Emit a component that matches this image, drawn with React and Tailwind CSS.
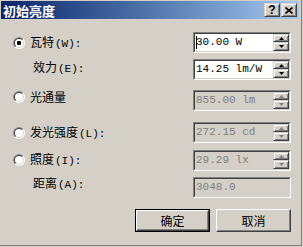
import React, { useId } from "react";

const raised =
  "border border-t-[#ffffff] border-l-[#ffffff] border-r-[#404040] border-b-[#404040] shadow-[inset_-1px_-1px_0_#808080]";
const raisedTitle =
  "border border-t-[#d4d0c8] border-l-[#d4d0c8] border-r-[#404040] border-b-[#404040] shadow-[inset_1px_1px_0_#ffffff,inset_-1px_-1px_0_#808080]";

function Radio({ checked }) {
  const id = useId().replace(/:/g, "");
  return (
    <svg width="12" height="12" viewBox="0 0 12 12" className="shrink-0">
      <defs>
        <clipPath id={"tl" + id}>
          <polygon points="0,0 12,0 0,12" />
        </clipPath>
      </defs>
      <circle cx="6" cy="6" r="6" fill="#ffffff" />
      <circle cx="6" cy="6" r="6" fill="#808080" clipPath={`url(#tl${id})`} />
      <circle cx="6" cy="6" r="5" fill="#d4d0c8" />
      <circle cx="6" cy="6" r="5" fill="#404040" clipPath={`url(#tl${id})`} />
      <circle cx="6" cy="6" r="4" fill="#ffffff" />
      {checked && <rect x="4" y="4" width="4" height="4" rx="1.2" fill="#000" />}
    </svg>
  );
}

function Arrow({ up, disabled }) {
  const c = disabled ? "#808080" : "#000000";
  return (
    <svg width="5" height="3" viewBox="0 0 5 3">
      {up ? (
        <polygon points="2.5,0 5,3 0,3" fill={c} />
      ) : (
        <polygon points="0,0 5,0 2.5,3" fill={c} />
      )}
    </svg>
  );
}

function Field({ value, disabled, spin = true, caret }) {
  return (
    <div className="w-[98px] h-[21px] border border-t-[#808080] border-l-[#808080] border-r-[#ffffff] border-b-[#ffffff] shrink-0">
      <div
        className={
          "w-full h-full flex border border-t-[#404040] border-l-[#404040] border-r-[#d4d0c8] border-b-[#d4d0c8] " +
          (disabled ? "bg-[#d4d0c8]" : "bg-white")
        }
      >
        <div
          className={
            "flex-1 flex items-center pl-[1px] text-[11px] leading-none font-['Liberation_Mono',monospace] whitespace-pre " +
            (disabled ? "text-[#808080]" : "text-black")
          }
        >
          {caret && <span className="inline-block w-[1px] h-[13px] bg-black -mr-[1px]" />}
          {value}
        </div>
        {spin && (
          <div className="w-[16px] flex flex-col bg-[#d4d0c8]">
            <div className={"h-[8px] flex items-center justify-center " + raisedTitle}>
              <Arrow up disabled={disabled} />
            </div>
            <div className={"flex-1 flex items-center justify-center " + raisedTitle}>
              <Arrow disabled={disabled} />
            </div>
          </div>
        )}
      </div>
    </div>
  );
}

function Label({ children, latin }) {
  return (
    <span className="text-[12px] leading-none text-black whitespace-pre font-['Noto_Sans_CJK_SC',sans-serif]">
      {children}
      {latin && (
        <span className="ml-[1px] text-[11px] font-['Liberation_Mono','Noto_Sans_CJK_SC',monospace]">{latin}</span>
      )}
    </span>
  );
}

function Row({ mt, radio, checked, label, latin, pb = "pb-[0px]", indent, children }) {
  return (
    <div className={"flex h-[21px] " + mt}>
      <div className={"w-[192px] flex items-center " + pb + " " + (indent ? "pl-[32px]" : "pl-[12px]")}>
        {radio && (
          <span className="mr-[5px] flex">
            <Radio checked={checked} />
          </span>
        )}
        <Label latin={latin}>{label}</Label>
      </div>
      {children}
    </div>
  );
}

export default function App() {
  return (
    <div className="w-[303px] h-[247px] bg-[#d4d0c8] overflow-hidden">
      <div className="w-[302px] h-[246px] border-r border-b border-[#808080] pt-[1px] pl-[1px] flex flex-col">
        <div className="w-[298px] h-[18px] bg-gradient-to-r from-[#0a246a] to-[#a6caf0] flex items-center justify-between pl-[2px] pr-[2px]">
          <span className="text-white font-bold text-[13px] leading-none font-['Noto_Sans_CJK_SC',sans-serif]">
            初始亮度
          </span>
          <div className="flex gap-[1px]">
            <div className={"w-[16px] h-[14px] bg-[#d4d0c8] flex items-center justify-center " + raisedTitle}>
              <span className="text-[12px] font-bold leading-none text-black font-['Liberation_Sans',sans-serif]">?</span>
            </div>
            <div className={"w-[16px] h-[14px] bg-[#d4d0c8] flex items-center justify-center " + raisedTitle}>
              <svg width="8" height="7" viewBox="0 0 8 7">
                <path d="M0.5 0.5 L7.5 6.5 M7.5 0.5 L0.5 6.5" stroke="#000" strokeWidth="1.6" />
              </svg>
            </div>
          </div>
        </div>

        <Row mt="mt-[13px]" radio checked label="瓦特" latin="(W):">
          <Field value="30.00 W" caret />
        </Row>
        <Row mt="mt-[6px]" indent label="效力" latin="(E):" pb="pb-[4px]">
          <Field value="14.25 lm/W" />
        </Row>
        <Row mt="mt-[10px]" radio label="光通量" pb="pb-[8px]">
          <Field value="855.00 lm" disabled />
        </Row>
        <Row mt="mt-[11px]" radio label="发光强度" latin="(L):">
          <Field value="272.15 cd" disabled />
        </Row>
        <Row mt="mt-[7px]" radio label="照度" latin="(I):" pb="pb-[2px]">
          <Field value="29.29 lx" disabled />
        </Row>
        <Row mt="mt-[6px]" indent label="距离" latin="(A):" pb="pb-[8px]">
          <Field value="3048.0" disabled spin={false} />
        </Row>

        <div className="flex justify-end gap-[6px] pr-[10px] mt-[11px]">
          <div className="w-[75px] h-[23px] border border-black">
            <div className={"w-full h-full flex items-center justify-center " + raised}>
              <Label>确定</Label>
            </div>
          </div>
          <div className={"w-[75px] h-[23px] flex items-center justify-center " + raised}>
            <Label>取消</Label>
          </div>
        </div>
      </div>
    </div>
  );
}
